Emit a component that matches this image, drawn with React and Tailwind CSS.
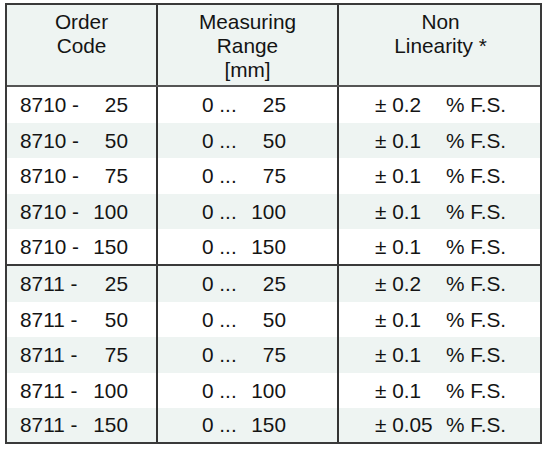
import React from "react";

const rows = [
  ["8710", "25", "25", "0.2"],
  ["8710", "50", "50", "0.1"],
  ["8710", "75", "75", "0.1"],
  ["8710", "100", "100", "0.1"],
  ["8710", "150", "150", "0.1"],
  ["8711", "25", "25", "0.2"],
  ["8711", "50", "50", "0.1"],
  ["8711", "75", "75", "0.1"],
  ["8711", "100", "100", "0.1"],
  ["8711", "150", "150", "0.05"],
];

export default function App() {
  return (
    <div className="w-[546px] h-[450px] bg-white pt-[3px] pl-[5px]" style={{ fontFamily: '"Liberation Sans", Arial, sans-serif' }}>
      <div className="w-[537px] border-2 border-[#3a3a3a] text-[20.8px] text-[#141414]">
        <div className="grid grid-cols-[151px_181px_201px] bg-[#eef4f2] border-b-2 border-[#555] h-[82px]">
          <div className="border-r-2 border-[#333] text-center leading-[24px] pt-[5px]">Order<br />Code</div>
          <div className="border-r-2 border-[#333] text-center leading-[24px] pt-[5px]">Measuring<br />Range<br />[mm]</div>
          <div className="text-center leading-[24px] pt-[5px] pl-[2px]">Non<br />Linearity *</div>
        </div>
        {rows.map((r, i) => (
          <div
            key={i}
            className={
              "grid grid-cols-[151px_181px_201px] items-center " +
              (i % 2 === 1 ? "bg-[#eef4f2] " : "bg-white ") +
              (i === 4 ? "h-[37px] border-b-2 border-[#3a3a3a]" : i === 9 ? "h-[34px]" : "h-[35.5px]")
            }
          >
            <div className="h-full border-r-2 border-[#333] flex items-center">
              <div className="ml-[13px] w-[108px] flex justify-between">
                <span>{r[0]} -</span>
                <span>{r[1]}</span>
              </div>
            </div>
            <div className="h-full border-r-2 border-[#333] flex items-center">
              <div className="ml-[44px] w-[84px] flex justify-between">
                <span>0 ...</span>
                <span>{r[2]}</span>
              </div>
            </div>
            <div className="h-full flex items-center">
              <span className="ml-[36px] w-[71px]">± {r[3]}</span>
              <span>% F.S.</span>
            </div>
          </div>
        ))}
      </div>
    </div>
  );
}
